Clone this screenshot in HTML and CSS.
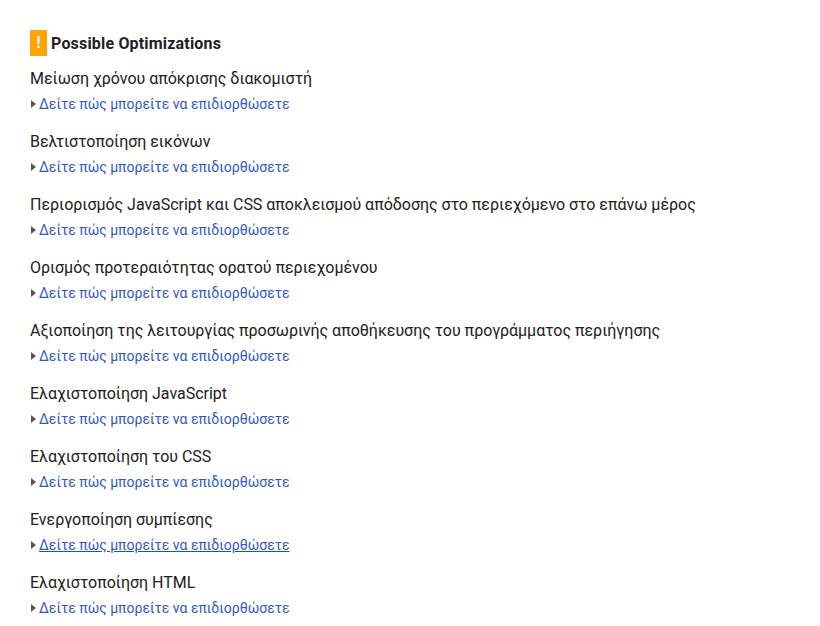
FILE: index.html
```html
<!DOCTYPE html>
<html lang="el">
<head>
  <meta charset="UTF-8" />
  <title>Possible Optimizations</title>
  <link rel="stylesheet" href="styles.css">
</head>
<body>
  <div class="container">
    <h3 class="section-title"><span class="warn-icon">!</span><span class="title-text">Possible Optimizations</span></h3>

    <div class="rule">
      <p class="rule-name">Μείωση χρόνου απόκρισης διακομιστή</p>
      <a class="fix-link" href="#">Δείτε πώς μπορείτε να επιδιορθώσετε</a>
    </div>
    <div class="rule">
      <p class="rule-name">Βελτιστοποίηση εικόνων</p>
      <a class="fix-link" href="#">Δείτε πώς μπορείτε να επιδιορθώσετε</a>
    </div>
    <div class="rule">
      <p class="rule-name">Περιορισμός JavaScript και CSS αποκλεισμού απόδοσης στο περιεχόμενο στο επάνω μέρος</p>
      <a class="fix-link" href="#">Δείτε πώς μπορείτε να επιδιορθώσετε</a>
    </div>
    <div class="rule">
      <p class="rule-name">Ορισμός προτεραιότητας ορατού περιεχομένου</p>
      <a class="fix-link" href="#">Δείτε πώς μπορείτε να επιδιορθώσετε</a>
    </div>
    <div class="rule">
      <p class="rule-name">Αξιοποίηση της λειτουργίας προσωρινής αποθήκευσης του προγράμματος περιήγησης</p>
      <a class="fix-link" href="#">Δείτε πώς μπορείτε να επιδιορθώσετε</a>
    </div>
    <div class="rule">
      <p class="rule-name">Ελαχιστοποίηση JavaScript</p>
      <a class="fix-link" href="#">Δείτε πώς μπορείτε να επιδιορθώσετε</a>
    </div>
    <div class="rule">
      <p class="rule-name">Ελαχιστοποίηση του CSS</p>
      <a class="fix-link" href="#">Δείτε πώς μπορείτε να επιδιορθώσετε</a>
    </div>
    <div class="rule">
      <p class="rule-name">Ενεργοποίηση συμπίεσης</p>
      <a class="fix-link hover" href="#">Δείτε πώς μπορείτε να επιδιορθώσετε</a>
    </div>
    <div class="rule">
      <p class="rule-name">Ελαχιστοποίηση HTML</p>
      <a class="fix-link" href="#">Δείτε πώς μπορείτε να επιδιορθώσετε</a>
    </div>
  </div>
</body>
</html>
```

FILE: styles.css
```css
body {
  margin: 0;
  background: #fff;
  font-family: Roboto, "Noto Sans", sans-serif;
  color: #212121;
}

.container {
  padding: 30px 30px 0;
}

.section-title {
  display: flex;
  margin: 0 0 10px;
  font-size: 16px;
  font-weight: 700;
  line-height: 26px;
  letter-spacing: 0.18px;
}

.warn-icon {
  width: 17px;
  height: 26px;
  margin-right: 4px;
  background: #ffa400;
  color: #fff;
  text-align: center;
}

.title-text {
  padding-top: 1px;
}

.rule {
  height: 63px;
}

.rule-name {
  margin: 0;
  font-size: 16px;
  line-height: 24px;
  letter-spacing: -0.024px;
}

.fix-link {
  display: inline-block;
  position: relative;
  margin-top: 3px;
  margin-left: 9px;
  font-size: 14px;
  line-height: 20px;
  color: #2f57c8;
  text-decoration: none;
}

.fix-link::before {
  content: '';
  position: absolute;
  left: -8px;
  top: 6px;
  border-left: 5px solid #555;
  border-top: 4px solid transparent;
  border-bottom: 4px solid transparent;
}

.fix-link.hover {
  text-decoration: underline;
  text-decoration-color: #1155cc;
}
```
